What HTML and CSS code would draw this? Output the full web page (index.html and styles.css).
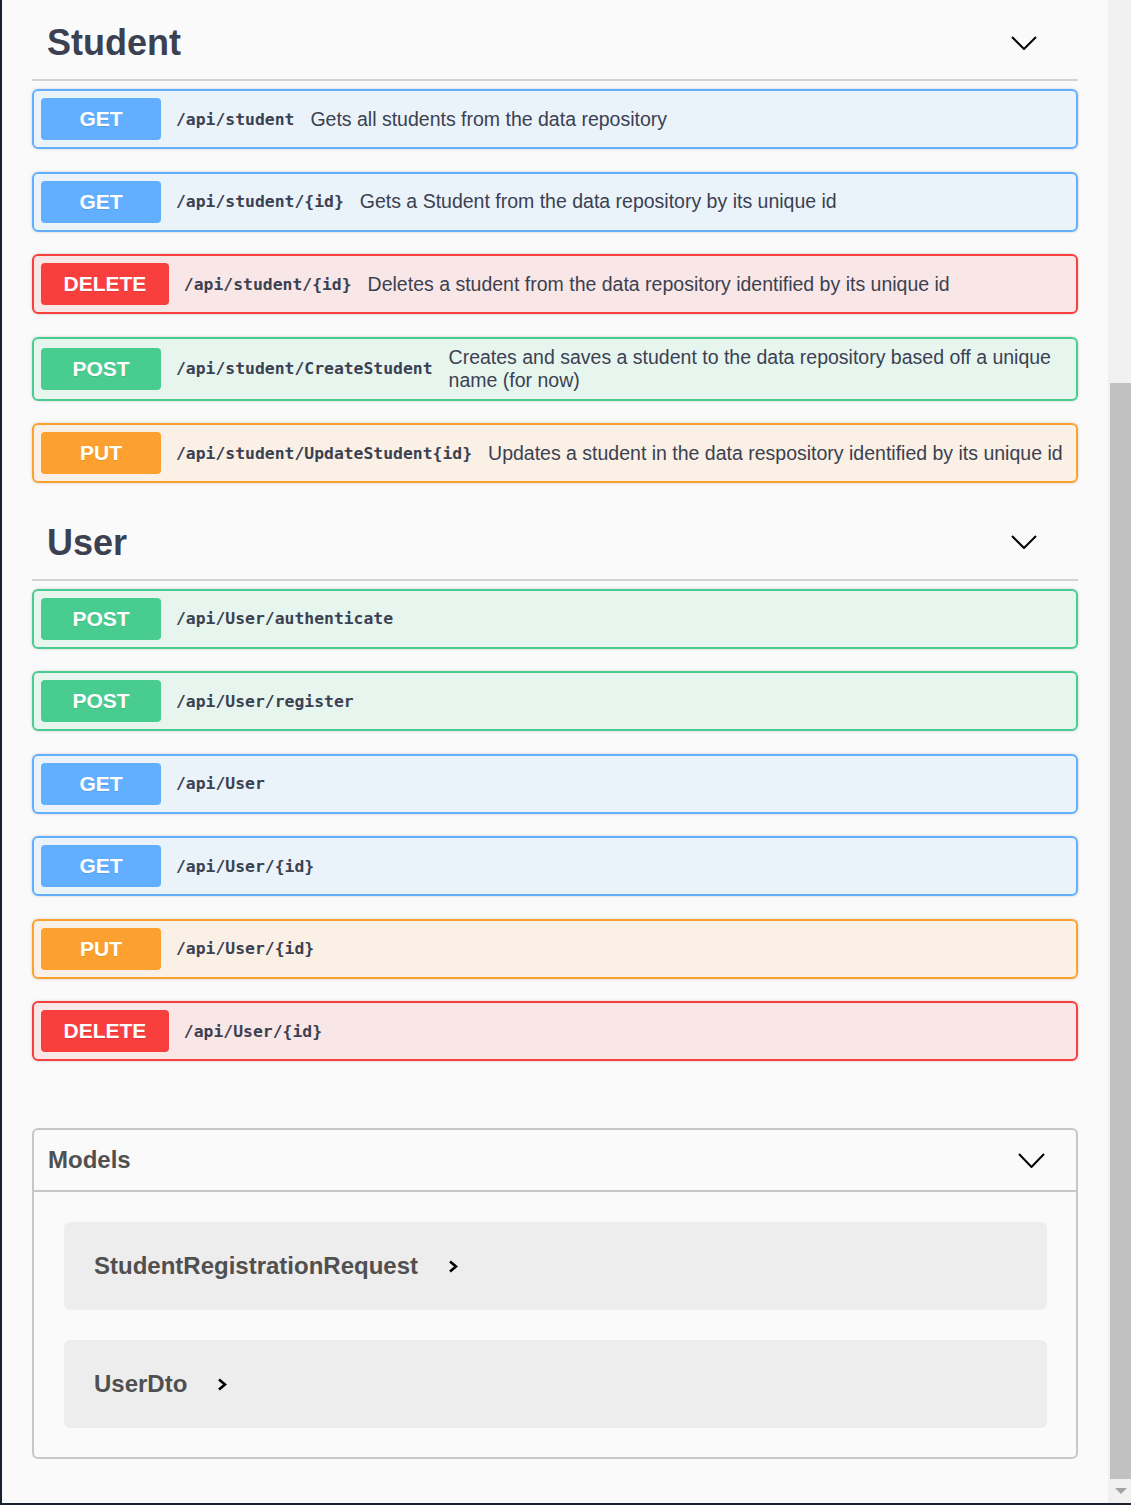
FILE: index.html
```html
<!DOCTYPE html>
<html lang="en">
<head>
<meta charset="utf-8">
<title>Swagger UI</title>
<link rel="stylesheet" href="styles.css">
</head>
<body>
<div class="page">
  <main class="main">
    <section class="tag-section">
      <h3 class="tag-header">
        <span class="tag-title">Student</span>
        <svg class="chev" width="26" height="14" viewBox="0 0 26 14"><path d="M1 1 L13 13 L25 1" fill="none" stroke="#000" stroke-width="2"/></svg>
      </h3>
      <div class="opblock get">
        <span class="method">GET</span>
        <span class="path">/api/student</span>
        <span class="desc">Gets all students from the data repository</span>
      </div>
      <div class="opblock get">
        <span class="method">GET</span>
        <span class="path">/api/student/{id}</span>
        <span class="desc">Gets a Student from the data repository by its unique id</span>
      </div>
      <div class="opblock delete">
        <span class="method">DELETE</span>
        <span class="path">/api/student/{id}</span>
        <span class="desc">Deletes a student from the data repository identified by its unique id</span>
      </div>
      <div class="opblock post">
        <span class="method">POST</span>
        <span class="path">/api/student/CreateStudent</span>
        <span class="desc">Creates and saves a student to the data repository based off a unique name (for now)</span>
      </div>
      <div class="opblock put">
        <span class="method">PUT</span>
        <span class="path">/api/student/UpdateStudent{id}</span>
        <span class="desc">Updates a student in the data respository identified by its unique id</span>
      </div>
    </section>

    <section class="tag-section">
      <h3 class="tag-header">
        <span class="tag-title">User</span>
        <svg class="chev" width="26" height="14" viewBox="0 0 26 14"><path d="M1 1 L13 13 L25 1" fill="none" stroke="#000" stroke-width="2"/></svg>
      </h3>
      <div class="opblock post">
        <span class="method">POST</span>
        <span class="path">/api/User/authenticate</span>
      </div>
      <div class="opblock post">
        <span class="method">POST</span>
        <span class="path">/api/User/register</span>
      </div>
      <div class="opblock get">
        <span class="method">GET</span>
        <span class="path">/api/User</span>
      </div>
      <div class="opblock get">
        <span class="method">GET</span>
        <span class="path">/api/User/{id}</span>
      </div>
      <div class="opblock put">
        <span class="method">PUT</span>
        <span class="path">/api/User/{id}</span>
      </div>
      <div class="opblock delete">
        <span class="method">DELETE</span>
        <span class="path">/api/User/{id}</span>
      </div>
    </section>

    <section class="models">
      <h4 class="models-header">
        <span>Models</span>
        <svg class="chev" width="27" height="15" viewBox="0 0 27 15"><path d="M1 1 L13.5 14 L26 1" fill="none" stroke="#000" stroke-width="2"/></svg>
      </h4>
      <div class="models-body">
        <div class="model">
          <span>StudentRegistrationRequest</span>
          <svg class="model-arrow" width="10" height="13" viewBox="0 0 10 13"><path d="M2 1.5 L8 6.5 L2 11.5" fill="none" stroke="#000" stroke-width="2.6"/></svg>
        </div>
        <div class="model">
          <span>UserDto</span>
          <svg class="model-arrow" width="10" height="13" viewBox="0 0 10 13"><path d="M2 1.5 L8 6.5 L2 11.5" fill="none" stroke="#000" stroke-width="2.6"/></svg>
        </div>
      </div>
    </section>
  </main>

  <div class="scrollbar">
    <div class="thumb"></div>
    <div class="sb-arrow">
      <svg width="12" height="6" viewBox="0 0 12 6"><path d="M0 0 L12 0 L6 6 Z" fill="#a3a3a3"/></svg>
    </div>
  </div>
</div>
</body>
</html>
```

FILE: styles.css
```css
html, body {
  margin: 0;
  padding: 0;
  background: #fafafa;
}

body {
  font-family: "Liberation Sans", Arial, sans-serif;
  color: #3b4151;
}

.page {
  display: flex;
  height: 1505px;
  box-sizing: border-box;
  border-left: 2px solid #18222c;
  border-bottom: 2px solid #18222c;
  overflow: hidden;
}

.main {
  flex: 1;
  min-width: 0;
  display: flex;
  flex-direction: column;
  padding: 6px 30px 0;
  background: #fafafa;
}

.tag-section {
  display: flex;
  flex-direction: column;
}

.tag-header {
  display: flex;
  align-items: center;
  justify-content: space-between;
  margin: 0 0 8px;
  padding: 15px 41px 15px 15px;
  font-size: 36px;
  line-height: 43px;
  font-weight: 700;
  color: #3b4151;
  border-bottom: 2px solid #d2d3d6;
}

.chev {
  display: block;
  flex: none;
}

.opblock {
  display: flex;
  align-items: center;
  padding: 7px;
  margin-bottom: 22.5px;
  border: 2px solid;
  border-radius: 6px;
  box-shadow: 0 0 3px rgba(0, 0, 0, 0.19);
}

.method {
  flex: none;
  box-sizing: border-box;
  min-width: 120px;
  padding: 9px 22.5px;
  font-size: 21px;
  line-height: 24px;
  font-weight: 700;
  text-align: center;
  color: #fff;
  border-radius: 4px;
  text-shadow: 0 1px 0 rgba(0, 0, 0, 0.1);
}

.path {
  flex: none;
  padding: 0 16px 0 15px;
  font-family: "DejaVu Sans Mono", "Liberation Mono", monospace;
  font-weight: 700;
  font-size: 16.4px;
  color: #3b4151;
}

.desc {
  flex: 1;
  min-width: 0;
  font-size: 19.5px;
  line-height: 23px;
  color: #3b4151;
}

.get {
  border-color: #61affe;
  background: rgba(97, 175, 254, 0.1);
}
.get .method { background: #61affe; }

.post {
  border-color: #49cc90;
  background: rgba(73, 204, 144, 0.1);
}
.post .method { background: #49cc90; }

.delete {
  border-color: #f93e3e;
  background: rgba(249, 62, 62, 0.1);
}
.delete .method { background: #f93e3e; }

.put {
  border-color: #fca130;
  background: rgba(252, 161, 48, 0.1);
}
.put .method { background: #fca130; }

.models {
  margin-top: 44.5px;
  border: 2px solid #c6c7cb;
  border-radius: 6px;
}

.models-header {
  display: flex;
  align-items: center;
  justify-content: space-between;
  margin: 0;
  padding: 16px 31px 16px 14px;
  font-size: 24px;
  line-height: 28px;
  font-weight: 700;
  color: #505050;
  border-bottom: 2px solid #c6c7cb;
}

.models-body {
  display: flex;
  flex-direction: column;
  gap: 30px;
  padding: 30px 29px 29px 30px;
}

.model {
  display: flex;
  align-items: center;
  gap: 30px;
  height: 88px;
  padding-left: 30px;
  background: #ededed;
  border-radius: 6px;
  font-size: 24px;
  font-weight: 700;
  color: #505050;
}

.model-arrow {
  display: block;
  flex: none;
}

.scrollbar {
  flex: none;
  width: 23px;
  display: flex;
  flex-direction: column;
  background: #f1f1f1;
}

.thumb {
  margin: 383px 0 0 2px;
  height: 1096px;
  background: #c1c1c1;
}

.sb-arrow {
  flex: 1;
  display: flex;
  align-items: center;
  justify-content: center;
  padding-left: 2px;
}
```
